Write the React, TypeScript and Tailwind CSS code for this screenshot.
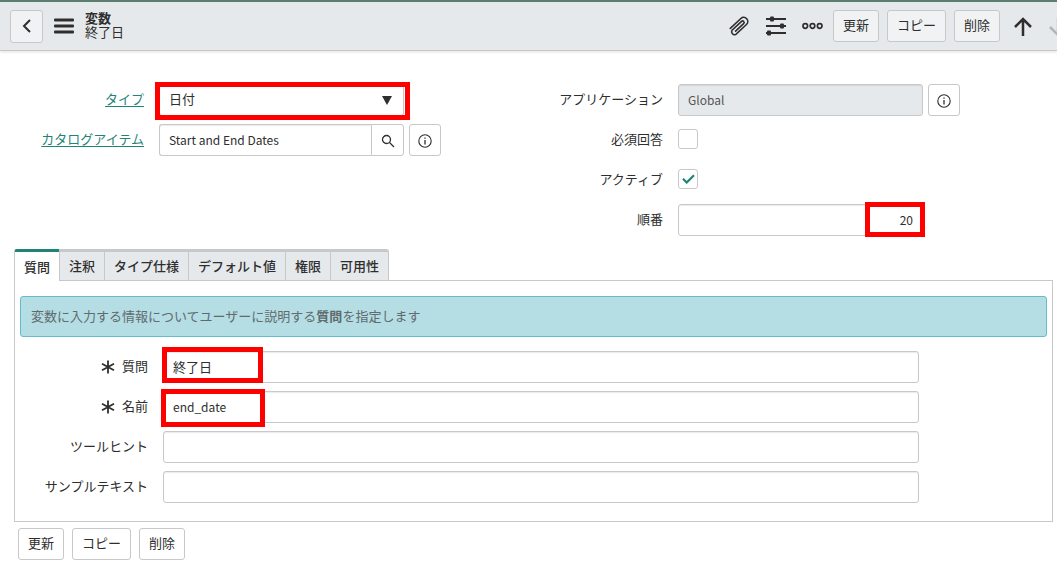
import React from 'react';

const inputClass =
  'block h-8 w-full rounded-[3px] border border-[#c8c8c8] px-[9px] pb-0.5 shadow-[inset_0_1px_1px_rgba(0,0,0,0.08)] outline-none';
const buttonClass =
  'h-8 shrink-0 rounded-[3px] border border-[#c8c8c8] px-[9px] pb-0.5 text-[13px] text-[#2e2e2e]';
const iconButtonClass =
  'flex h-8 w-8 shrink-0 items-center justify-center rounded-[3px] border border-[#c8c8c8] bg-white pt-0.5';
const checkboxClass = 'mb-0.5 h-5 w-5 appearance-none rounded-[3px] border border-[#c8c8c8] bg-white';

const tabs = ['質問', '注釈', 'タイプ仕様', 'デフォルト値', '権限', '可用性'];
const actions = ['更新', 'コピー', '削除'];

const Mark = ({ className }: { className: string }) => (
  <span className={`pointer-events-none absolute border-5 border-[#ff0000] ${className}`} />
);

const InfoIcon = () => (
  <svg width="14" height="14" viewBox="0 0 14 14" fill="none" stroke="#2e2e2e" strokeWidth="1.1">
    <circle cx="7" cy="7" r="6.2" />
    <path d="M7 6v4.5M7 3.4v1.3" strokeWidth="1.3" />
  </svg>
);

const Asterisk = () => (
  <svg width="14" height="14" viewBox="0 0 14 14" stroke="#2e2e2e" strokeWidth="1.8">
    <path d="M7 0.5v13M1 3.8l12 6.4M13 3.8l-12 6.4" />
  </svg>
);

const PaperclipIcon = () => (
  <svg width="22" height="22" viewBox="0 0 22 22" fill="none" stroke="#2e2e2e" strokeWidth="1.6" strokeLinecap="round">
    <path
      transform="translate(11 11) rotate(47)"
      d="M-4.2 8V-6.5a4.1 4.1 0 0 1 8.2 0V8a2.900 2.900 0 0 1-5.600 0V-5a1.500 1.500 0 0 1 3 0V6"
    />
  </svg>
);

const Header = () => (
  <header className="flex h-[51px] items-center overflow-hidden border-t-2 border-b border-t-[#5a7f71] border-b-[#c8c8c8] bg-[#e6e9eb] pl-2.5 shadow-[0_1px_3px_rgba(0,0,0,0.12)]">
    <button aria-label="戻る" className="flex h-[33px] w-[33px] shrink-0 items-center justify-center rounded-[3px] border border-[#c8c8c8] bg-[#f1f2f4]">
      <svg width="10" height="14" viewBox="0 0 10 14" fill="none" stroke="#2e2e2e" strokeWidth="2">
        <path d="M8 1L2 7l6 6" />
      </svg>
    </button>
    <button aria-label="メニュー" className="ml-[11px]">
      <svg width="20" height="16" viewBox="0 0 20 16" fill="#2e2e2e">
        <rect width="20" height="3" y="0.5" rx="1" />
        <rect width="20" height="3" y="6.5" rx="1" />
        <rect width="20" height="3" y="12.5" rx="1" />
      </svg>
    </button>
    <h1 className="ml-[11px] pb-0.5 text-[13px] leading-[14px] text-[#2e2e2e]">
      <span className="block font-bold">変数</span>
      <span className="block">終了日</span>
    </h1>

    <div className="ml-auto flex items-center">
      <button aria-label="添付" className="mr-4">
        <PaperclipIcon />
      </button>
      <button aria-label="設定" className="mr-4">
        <svg width="20" height="20" viewBox="0 0 20 20" fill="#2e2e2e">
          <path d="M0 2h20v2H0zM0 9h20v2H0zM0 16h20v2H0z" />
          <rect x="4" y="0.5" width="4" height="5" rx="1" />
          <rect x="14" y="7.5" width="4" height="5" rx="1" />
          <rect x="1" y="14.5" width="4" height="5" rx="1" />
        </svg>
      </button>
      <button aria-label="その他" className="mr-2.5">
        <svg width="21" height="8" viewBox="0 0 21 8" fill="none" stroke="#2e2e2e" strokeWidth="1.7">
          <circle cx="3.3" cy="4" r="2.3" />
          <circle cx="10.5" cy="4" r="2.3" />
          <circle cx="17.7" cy="4" r="2.3" />
        </svg>
      </button>
      <div className="flex gap-2">
        {actions.map((text) => (
          <button key={text} className={`${buttonClass} bg-[#f1f2f4]`}>{text}</button>
        ))}
      </div>
      <button aria-label="前へ" className="ml-3.5 pt-0.5">
        <svg width="18" height="20" viewBox="0 0 18 20" fill="none" stroke="#2e2e2e" strokeWidth="2.5">
          <path d="M9 19V2M1 10l8-8 8 8" />
        </svg>
      </button>
      <button aria-label="次へ" className="ml-[17px] w-2 overflow-hidden pt-0.5">
        <svg width="18" height="20" viewBox="0 0 18 20" fill="none" stroke="#b3b6b8" strokeWidth="2.5">
          <path d="M9 1v17M1 10l8 8 8-8" />
        </svg>
      </button>
    </div>
  </header>
);

type FieldProps = {
  label: string;
  id: string;
  link?: boolean;
  children: React.ReactNode;
  extra?: React.ReactNode;
};

const Field = ({ label, id, link, children, extra }: FieldProps) => (
  <div className="grid grid-cols-[130px_1fr_32px] items-center">
    <label htmlFor={id} className="pb-0.5 text-right">
      {link ? <a href="#" className="text-[#1f8476] underline underline-offset-2">{label}</a> : label}
    </label>
    <div className="relative ml-[15px] mr-[5px] flex h-8 items-center">{children}</div>
    {extra}
  </div>
);

type TextRowProps = {
  label: string;
  id: string;
  value?: string;
  required?: boolean;
  textClass?: string;
  children?: React.ReactNode;
};

const TextRow = ({ label, id, value, required, textClass = 'text-[13px]', children }: TextRowProps) => (
  <div className="grid grid-cols-[133px_1fr] items-center gap-[15px]">
    <label htmlFor={id} className="flex items-center justify-end gap-[7px]">
      {required && <Asterisk />}
      <span className="pb-0.5">{label}</span>
    </label>
    <div className="relative">
      <input id={id} defaultValue={value} className={`${inputClass} bg-white ${textClass}`} />
      {children}
    </div>
  </div>
);

const App = () => (
  <div className="overflow-x-hidden bg-white font-['Noto_Sans_CJK_JP',sans-serif] text-[13px] leading-5 text-[#2e2e2e]">
    <Header />

    <main className="pt-[33px] pr-1 pl-3.5">
      <div className="grid grid-cols-2 pr-px">
        <div className="flex flex-col gap-2 pr-[92px]">
          <Field label="タイプ" id="type" link>
            <select id="type" className={`${inputClass} appearance-none bg-white text-[13px]`}>
              <option>日付</option>
            </select>
            <svg className="pointer-events-none absolute top-3 right-3" width="10" height="9" viewBox="0 0 10 9" fill="#2e2e2e">
              <path d="M0 0h10L5 9z" />
            </svg>
            <Mark className="-top-0.5 -right-1.5 -bottom-1 -left-1" />
          </Field>
          <Field
            label="カタログアイテム"
            id="catalog"
            link
            extra={<button aria-label="情報" className={iconButtonClass}><InfoIcon /></button>}
          >
            <input
              id="catalog"
              defaultValue="Start and End Dates"
              className={`${inputClass} rounded-r-none border-r-0 bg-white text-[12px]`}
            />
            <button aria-label="検索" className={`${iconButtonClass} w-[33px] rounded-l-none`}>
              <svg width="14" height="14" viewBox="0 0 14 14" fill="none" stroke="#2e2e2e" strokeWidth="1.3">
                <circle cx="5.5" cy="5.5" r="4" />
                <path d="M8.500 8.500l4.500 4.500" />
              </svg>
            </button>
          </Field>
        </div>

        <div className="flex flex-col gap-2 pr-[92px]">
          <Field
            label="アプリケーション"
            id="application"
            extra={<button aria-label="情報" className={iconButtonClass}><InfoIcon /></button>}
          >
            <input
              id="application"
              readOnly
              defaultValue="Global"
              className={`${inputClass} bg-[#e6e9eb] text-[12px] text-[#555555]`}
            />
          </Field>
          <Field label="必須回答" id="mandatory">
            <input id="mandatory" type="checkbox" className={checkboxClass} />
          </Field>
          <Field label="アクティブ" id="active">
            <input id="active" type="checkbox" defaultChecked className={checkboxClass} />
            <svg className="pointer-events-none absolute left-1 mb-0.5" width="13" height="10" viewBox="0 0 13 10" fill="none" stroke="#1f8476" strokeWidth="2.2">
              <path d="M1 4.800l3.700 3.700L12 1.200" />
            </svg>
          </Field>
          <Field label="順番" id="order">
            <input id="order" defaultValue="20" className={`${inputClass} bg-white text-right text-[12px]`} />
            <Mark className="-top-0.5 -right-0.5 -bottom-px w-[60px]" />
          </Field>
        </div>
      </div>

      <div role="tablist" className="mt-[13px] flex">
        {tabs.map((tab, i) => (
          <button
            key={tab}
            role="tab"
            aria-selected={i === 0}
            className={`h-8 border-t-3 border-l border-l-[#c8c8c8] px-[9px] font-medium last:rounded-tr-[3px] last:border-r last:border-r-[#c8c8c8] ${
              i === 0
                ? 'relative rounded-tl-[3px] border-t-[#1f8476] bg-white'
                : 'border-t-[#c8c8c8] border-b border-b-[#c8c8c8] bg-[#e6e9eb]'
            }`}
          >
            {tab}
          </button>
        ))}
      </div>

      <section className="-mt-px border border-[#c8c8c8] px-[5px] pt-[15px] pb-[18px]">
        <p className="rounded-[3px] border border-[#65bccf] bg-[#b5dde4] px-2.5 pt-2 pb-2.5 leading-[21px] text-[#5f6b6e]">
          変数に入力する情報についてユーザーに説明する<b>質問</b>を指定します
        </p>
        <div className="-ml-[5px] mt-3.5 flex flex-col gap-2 pr-32">
          <TextRow label="質問" id="question" value="終了日" required>
            <Mark className="-top-1 bottom-0 -left-px w-[101px]" />
          </TextRow>
          <TextRow label="名前" id="name" value="end_date" required textClass="text-[12px]">
            <Mark className="-top-0.5 -bottom-1 -left-0.5 w-[104px]" />
          </TextRow>
          <TextRow label="ツールヒント" id="tooltip" />
          <TextRow label="サンプルテキスト" id="example" />
        </div>
      </section>

      <div className="mt-1.5 ml-1 flex gap-2">
        {actions.map((text) => (
          <button key={text} className={`${buttonClass} bg-white`}>{text}</button>
        ))}
      </div>
    </main>
  </div>
);

export default App;
